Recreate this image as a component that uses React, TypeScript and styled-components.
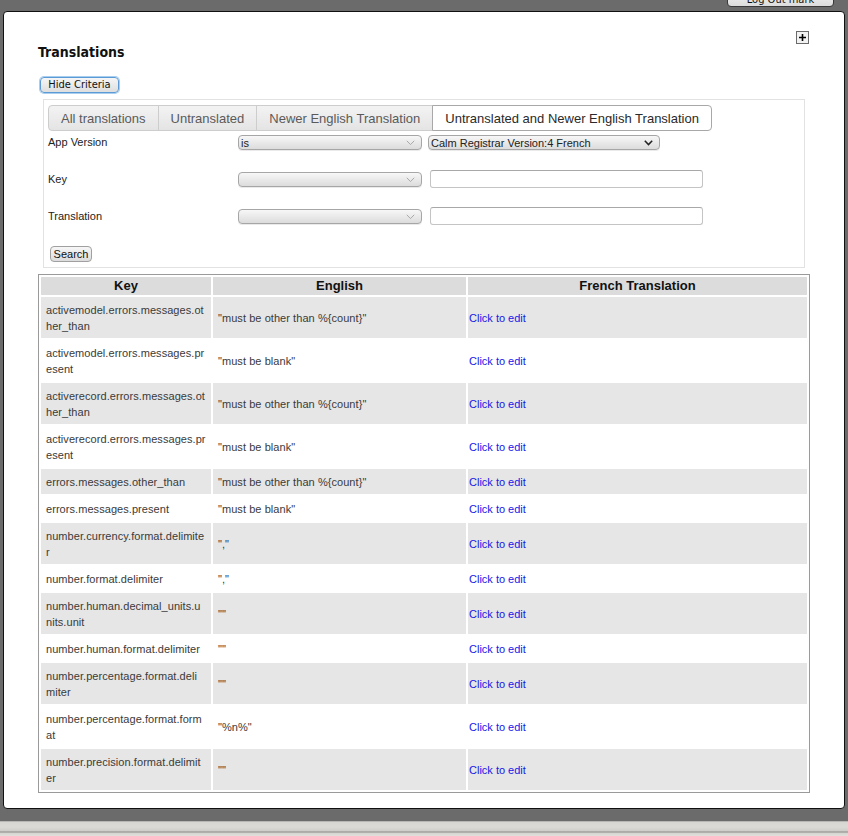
import React from "react";
import styled, { createGlobalStyle } from "styled-components";

const GlobalStyle = createGlobalStyle`
  html, body { margin: 0; padding: 0; }
  body {
    background: #6b6b6b;
    font-family: "Liberation Sans", Arial, sans-serif;
    width: 848px;
    height: 836px;
    overflow: hidden;
  }
`;

const condensed = `"DejaVu Sans Condensed", "Liberation Sans Narrow", "DejaVu Sans", sans-serif`;

const Page = styled.div`
  display: flex;
  flex-direction: column;
  width: 848px;
  height: 836px;
`;

const TopBar = styled.div`
  height: 11px;
  display: flex;
  justify-content: flex-end;
  align-items: flex-end;
  padding-right: 14px;
  overflow: hidden;
`;

const LogOutButton = styled.button`
  height: 18px;
  margin-bottom: 4px;
  padding: 0 0 1px;
  width: 107px;
  border: 1px solid #3a3a3a;
  border-radius: 4px;
  background: linear-gradient(#f6f6f6, #dcdcdc);
  font-family: ${condensed};
  font-stretch: condensed;
  font-size: 11px;
  line-height: 11px;
  color: #111;
  display: flex;
  justify-content: center;
  align-items: flex-end;
`;

const Panel = styled.main`
  height: 798px;
  box-sizing: border-box;
  margin: 0 3px;
  background: #fff;
  border: 1px solid #111;
  border-radius: 4px;
  padding: 18px 35px 0 34px;
  display: flex;
  flex-direction: column;
`;

const Gap = styled.div`
  height: 12px;
`;

const Taskbar = styled.div`
  height: 15px;
  background: linear-gradient(
    #9a9894 0px,
    #d8d6d2 1px,
    #dcdad6 6px,
    #cfcdc9 10px,
    #8c8a86 11px,
    #d6d4d0 12px,
    #e2e0dc 15px
  );
`;

const HeaderRow = styled.div`
  display: flex;
  justify-content: space-between;
  align-items: flex-start;
`;

const Title = styled.h1`
  margin: 13px 0 0;
  font-family: ${condensed};
  font-stretch: condensed;
  font-size: 14px;
  line-height: 18px;
  font-weight: bold;
  color: #111;
`;

const ExpandToggle = styled.span`
  display: block;
  width: 13px;
  height: 13px;
`;

const HideButton = styled.button`
  align-self: flex-start;
  margin: 16px 0 0 2px;
  width: 79px;
  height: 16px;
  padding: 0;
  border: 1px solid #5b9bd5;
  box-shadow: 0 0 0 1px #a9cdef;
  border-radius: 4px;
  background: linear-gradient(#f6f6f6, #dedede);
  font-family: ${condensed};
  font-stretch: condensed;
  font-size: 11px;
  line-height: 14px;
  color: #111;
`;

const CriteriaBox = styled.section`
  margin: 6px 4px 0 5px;
  height: 169px;
  box-sizing: border-box;
  border: 1px solid #e2e2e2;
  padding: 5px 4px 0;
  display: flex;
  flex-direction: column;
`;

const TabBar = styled.div`
  display: flex;
  height: 26px;
`;

const Tab = styled.div<{ $active?: boolean; $first?: boolean }>`
  box-sizing: border-box;
  height: 26px;
  display: flex;
  align-items: center;
  padding: 0 12px;
  margin-left: ${(p) => (p.$first ? "0" : "-1px")};
  font-size: 13px;
  color: ${(p) => (p.$active ? "#2a2a2a" : "#5a5a5a")};
  background: ${(p) => (p.$active ? "#fff" : "linear-gradient(#f3f3f3, #e4e4e4)")};
  border: 1px solid ${(p) => (p.$active ? "#a8a8a8" : "#cdcdcd")};
  border-radius: ${(p) => (p.$active ? "0 4px 4px 0" : p.$first ? "4px 0 0 4px" : "0")};
  position: ${(p) => (p.$active ? "relative" : "static")};
`;

const FormGrid = styled.div`
  margin-top: 3px;
  display: grid;
  grid-template-columns: 184px 184px auto;
  grid-auto-rows: 37px;
  column-gap: 6px;
  align-items: start;
`;

const FieldLabel = styled.div`
  font-size: 11px;
  line-height: 16px;
  color: #222;
`;

const SelectBox = styled.div<{ $width: number; $dark?: boolean }>`
  box-sizing: border-box;
  width: ${(p) => p.$width}px;
  height: 15px;
  margin-top: 1px;
  border: 1px solid #a6a6a6;
  border-radius: 4px;
  background: linear-gradient(#f7f7f7, #dcdcdc);
  box-shadow: 0 1px 0 #eaeaea;
  display: flex;
  align-items: center;
  justify-content: space-between;
  padding: 0 6px 0 2px;
  font-size: 11px;
  color: #222;
  svg {
    flex: none;
  }
`;

const TextInput = styled.div`
  box-sizing: border-box;
  width: 273px;
  height: 18px;
  margin: -1px 0 0 2px;
  border: 1px solid #c4c4c4;
  border-top-color: #a8a8a8;
  border-radius: 3px;
  background: #fff;
`;

const SearchButton = styled.button`
  align-self: flex-start;
  margin: 1px 0 0 2px;
  width: 42px;
  height: 16px;
  padding: 0;
  border: 1px solid #a0a0a0;
  border-radius: 4px;
  background: linear-gradient(#f7f7f7, #dcdcdc);
  font-family: "Liberation Sans", Arial, sans-serif;
  font-size: 11px;
  line-height: 13px;
  color: #111;
`;

const Table = styled.table`
  margin-top: 6px;
  width: 772px;
  table-layout: fixed;
  border: 1px solid #9a9a9a;
  border-spacing: 2px;
  font-size: 11px;
`;

const HeadCell = styled.th`
  background: #dcdcdc;
  font-size: 13px;
  line-height: 16px;
  padding: 1px 4px;
  color: #111;
  font-weight: bold;
  text-align: center;
`;

const Row = styled.tr<{ $odd: boolean }>`
  background: ${(p) => (p.$odd ? "#e6e6e6" : "#fff")};
`;

const Cell = styled.td`
  padding: 5px 5px 4px;
  line-height: 16px;
  color: #3a3a3a;
  letter-spacing: 0.06px;
  vertical-align: middle;
  word-break: break-all;
`;

const LinkCell = styled.td`
  padding: 5px 1px 4px;
  line-height: 16px;
  vertical-align: middle;
`;

const EditLink = styled.a`
  color: #1717e8;
  text-decoration: none;
  cursor: pointer;
`;

const Chevron = ({ dark }: { dark?: boolean }) => (
  <svg width="9" height="6" viewBox="0 0 9 6">
    <path
      d="M0.8 0.8 L4.5 4.6 L8.2 0.8"
      fill="none"
      stroke={dark ? "#222" : "#a9a9a9"}
      strokeWidth={dark ? 1.5 : 1}
    />
  </svg>
);

const PlusIcon = () => (
  <svg width="13" height="13" viewBox="0 0 13 13">
    <rect x="0.5" y="0.5" width="12" height="12" fill="#f2f2f2" stroke="#6a6a6a" />
    <path d="M6.5 3 V10 M3 6.5 H10" stroke="#000" strokeWidth="1.6" />
  </svg>
);

const rows: [string, string][] = [
  ["activemodel.errors.messages.other_than", '"must be other than %{count}"'],
  ["activemodel.errors.messages.present", '"must be blank"'],
  ["activerecord.errors.messages.other_than", '"must be other than %{count}"'],
  ["activerecord.errors.messages.present", '"must be blank"'],
  ["errors.messages.other_than", '"must be other than %{count}"'],
  ["errors.messages.present", '"must be blank"'],
  ["number.currency.format.delimiter", '","'],
  ["number.format.delimiter", '","'],
  ["number.human.decimal_units.units.unit", '""'],
  ["number.human.format.delimiter", '""'],
  ["number.percentage.format.delimiter", '""'],
  ["number.percentage.format.format", '"%n%"'],
  ["number.precision.format.delimiter", '""'],
];

const tabs = [
  "All translations",
  "Untranslated",
  "Newer English Translation",
  "Untranslated and Newer English Translation",
];

export default function App() {
  return (
    <Page>
      <GlobalStyle />
      <TopBar>
        <LogOutButton>Log Out mark</LogOutButton>
      </TopBar>
      <Panel>
        <HeaderRow>
          <Title>Translations</Title>
          <ExpandToggle>
            <PlusIcon />
          </ExpandToggle>
        </HeaderRow>
        <HideButton>Hide Criteria</HideButton>
        <CriteriaBox>
          <TabBar>
            {tabs.map((t, i) => (
              <Tab key={t} $first={i === 0} $active={i === tabs.length - 1}>
                {t}
              </Tab>
            ))}
          </TabBar>
          <FormGrid>
            <FieldLabel>App Version</FieldLabel>
            <SelectBox $width={184}>
              <span>is</span>
              <Chevron />
            </SelectBox>
            <SelectBox $width={232} $dark>
              <span>Calm Registrar Version:4 French</span>
              <Chevron dark />
            </SelectBox>

            <FieldLabel>Key</FieldLabel>
            <SelectBox $width={184}>
              <span />
              <Chevron />
            </SelectBox>
            <TextInput />

            <FieldLabel>Translation</FieldLabel>
            <SelectBox $width={184}>
              <span />
              <Chevron />
            </SelectBox>
            <TextInput />
          </FormGrid>
          <SearchButton>Search</SearchButton>
        </CriteriaBox>
        <Table>
          <colgroup>
            <col style={{ width: 170 }} />
            <col style={{ width: 253 }} />
            <col />
          </colgroup>
          <thead>
            <tr>
              <HeadCell>Key</HeadCell>
              <HeadCell>English</HeadCell>
              <HeadCell>French Translation</HeadCell>
            </tr>
          </thead>
          <tbody>
            {rows.map(([k, e], i) => (
              <Row key={k} $odd={i % 2 === 0}>
                <Cell>{k}</Cell>
                <Cell>{e}</Cell>
                <LinkCell>
                  <EditLink>Click to edit</EditLink>
                </LinkCell>
              </Row>
            ))}
          </tbody>
        </Table>
      </Panel>
      <Gap />
      <Taskbar />
    </Page>
  );
}
